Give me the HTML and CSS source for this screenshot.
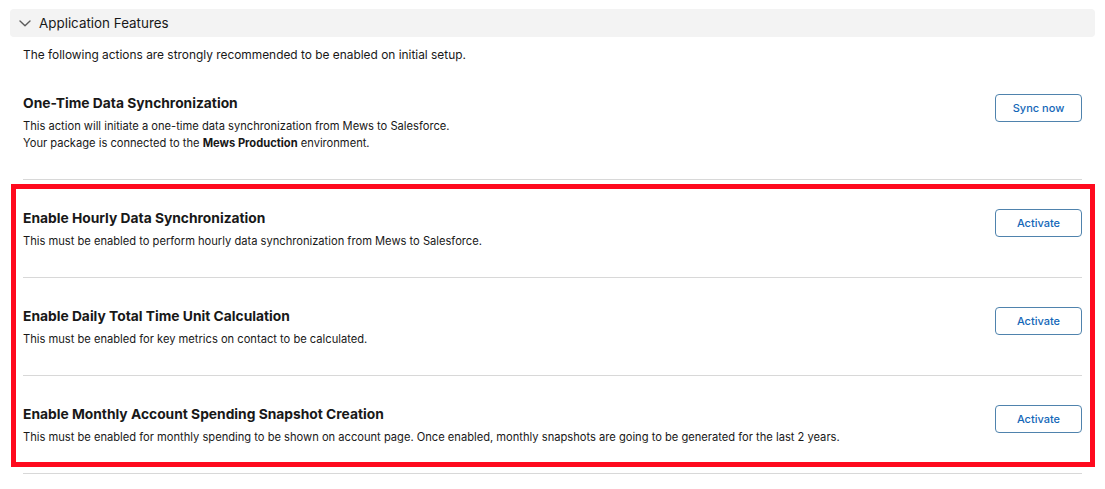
FILE: index.html
```html
<!DOCTYPE html>
<html lang="en">
<head>
<meta charset="utf-8">
<title>Application Features</title>
<link rel="stylesheet" href="styles.css">
</head>
<body>
<div class="panel">
  <div class="panel-header">
    <svg class="chevron" width="12" height="7" viewBox="0 0 12 7" aria-hidden="true">
      <path d="M1 1 L6 5.8 L11 1" fill="none" stroke="#5c5c5c" stroke-width="1.4" stroke-linecap="round" stroke-linejoin="round"/>
    </svg>
    <span class="panel-title">Application Features</span>
  </div>
  <div class="panel-body">
    <p class="intro">The following actions are strongly recommended to be enabled on initial setup.</p>
    <div class="features">
      <div class="feature">
        <div class="feature-text">
          <h3 class="feature-title">One-Time Data Synchronization</h3>
          <p class="feature-desc">This action will initiate a one-time data synchronization from Mews to Salesforce.</p>
          <p class="feature-desc">Your package is connected to the <b>Mews Production</b> environment.</p>
        </div>
        <button class="btn">Sync now</button>
      </div>
      <div class="highlight-group">
        <div class="feature">
          <div class="feature-text">
            <h3 class="feature-title">Enable Hourly Data Synchronization</h3>
            <p class="feature-desc">This must be enabled to perform hourly data synchronization from Mews to Salesforce.</p>
          </div>
          <button class="btn">Activate</button>
        </div>
        <div class="feature">
          <div class="feature-text">
            <h3 class="feature-title">Enable Daily Total Time Unit Calculation</h3>
            <p class="feature-desc">This must be enabled for key metrics on contact to be calculated.</p>
          </div>
          <button class="btn">Activate</button>
        </div>
        <div class="feature">
          <div class="feature-text">
            <h3 class="feature-title">Enable Monthly Account Spending Snapshot Creation</h3>
            <p class="feature-desc">This must be enabled for monthly spending to be shown on account page. Once enabled, monthly snapshots are going to be generated for the last 2 years.</p>
          </div>
          <button class="btn">Activate</button>
        </div>
        <div class="highlight-frame"></div>
      </div>
    </div>
  </div>
</div>
</body>
</html>
```

FILE: styles.css
```css
* { box-sizing: border-box; }

html, body {
  background: #ffffff;
}

body {
  margin: 9px 10px 0 10px;
  font-family: Inter, "Noto Sans", "Liberation Sans", sans-serif;
  color: #181818;
}

.panel-header {
  display: flex;
  align-items: center;
  height: 28px;
  padding-left: 9px;
  background: #f3f3f3;
  border-radius: 4px;
}

.chevron {
  display: block;
  margin-right: 8px;
}

.panel-title {
  font-size: 13.4px;
  line-height: 20px;
  color: #181818;
}

.panel-body {
  padding: 9px 13px 0 13px;
}

.intro {
  margin: 0;
  font-size: 11.9px;
  line-height: 17px;
}

.features {
  margin-top: 2px;
}

.feature {
  display: flex;
  align-items: flex-start;
  justify-content: space-between;
  padding: 28px 0 27px 0;
  border-bottom: 1px solid #d8d8d8;
}

.feature-text {
  min-width: 0;
}

.feature-title {
  margin: 0 0 5px 0;
  font-size: 13.8px;
  line-height: 20px;
  font-weight: 700;
}

.feature-desc {
  margin: 0;
  font-size: 11.15px;
  line-height: 17px;
}

.feature-desc b {
  font-weight: 700;
}

.btn {
  flex: none;
  width: 87px;
  height: 28px;
  margin-top: 1px;
  padding: 0;
  background: #ffffff;
  border: 1px solid #4f83ad;
  border-radius: 4px;
  color: #1467b8;
  font-family: Inter, "Noto Sans", "Liberation Sans", sans-serif;
  font-size: 11px;
  font-weight: 500;
}

.highlight-group {
  position: relative;
}

.highlight-frame {
  position: absolute;
  top: 4px;
  left: -12px;
  right: -13px;
  bottom: 7px;
  border: 5px solid #ff0a1e;
  pointer-events: none;
}
```
